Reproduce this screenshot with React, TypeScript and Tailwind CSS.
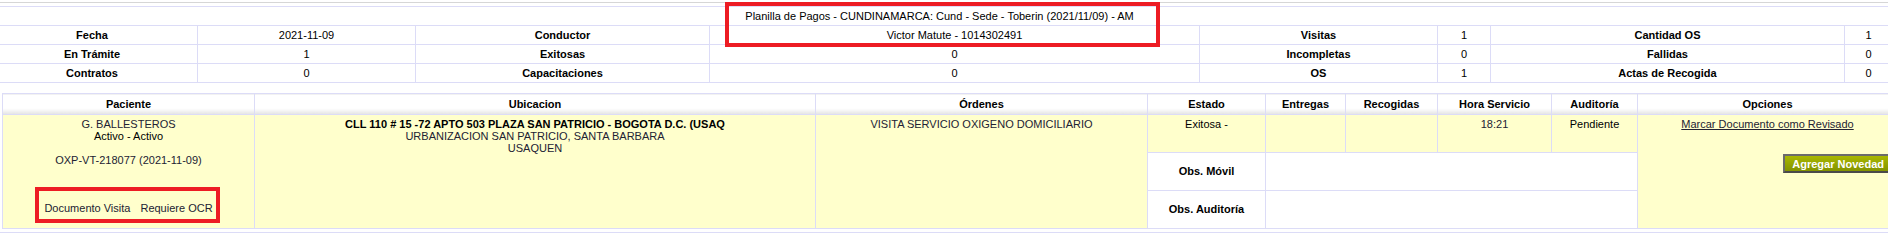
import React from 'react';

const summary = [
  ['Fecha', '2021-11-09', 'Conductor', 'Victor Matute - 1014302491', 'Visitas', '1', 'Cantidad OS', '1'],
  ['En Trámite', '1', 'Exitosas', '0', 'Incompletas', '0', 'Fallidas', '0'],
  ['Contratos', '0', 'Capacitaciones', '0', 'OS', '1', 'Actas de Recogida', '0'],
];

const sumWidths = ['w-[211px]', 'w-[218px]', 'w-[294px]', 'w-[490px]', 'w-[238px]', 'w-[53px]', 'w-[354px]', 'w-[48px]'];

const headers = [
  ['Paciente', 'w-[252px]'],
  ['Ubicacion', 'w-[561px]'],
  ['Órdenes', 'w-[332px]'],
  ['Estado', 'w-[118px]'],
  ['Entregas', 'w-[80px]'],
  ['Recogidas', 'w-[92px]'],
  ['Hora Servicio', 'w-[114px]'],
  ['Auditoría', 'w-[86px]'],
  ['Opciones', 'w-[260px]'],
];

function App() {
  const cell = 'border border-[#dcdcf7] p-0 text-center align-middle';
  const yellow = 'bg-[#ffffcc]';

  return (
    <div className="relative w-[1888px] h-[251px] overflow-hidden bg-white text-[11px] text-black" style={{ fontFamily: '"Liberation Sans", Arial, sans-serif' }}>
      <div className="h-[2px]" />
      <div className="h-[1px] bg-[#d6d6d6]" />
      <div className="h-[3px]" />

      {/* resumen de la planilla */}
      <div className="overflow-hidden">
        <table className="-ml-[14px] w-[1905px] table-fixed border-collapse border-t border-[#dcdcf7]">
          <colgroup>
            {sumWidths.map((w, i) => (
              <col key={i} className={w} />
            ))}
          </colgroup>
          <tbody>
            <tr>
              <td colSpan={8} className="border-b border-[#dcdcf7] p-0 h-[18px] leading-[18px] text-center">
                Planilla de Pagos - CUNDINAMARCA: Cund - Sede - Toberin (2021/11/09) - AM
              </td>
            </tr>
            {summary.map((row, r) => (
              <tr key={r}>
                {row.map((v, i) => (
                  <td key={i} className={`${cell} h-[18px] leading-[18px] ${i % 2 === 0 ? 'font-bold' : ''}`}>
                    {v}
                  </td>
                ))}
              </tr>
            ))}
          </tbody>
        </table>
      </div>

      <div className="h-[10px]" />

      {/* detalle */}
      <div className="overflow-hidden pl-[2px]">
        <table className="w-[1895px] table-fixed border-collapse text-[#222233]">
          <colgroup>
            {headers.map(([h, w]) => (
              <col key={h} className={w} />
            ))}
          </colgroup>
          <thead>
            <tr>
              {headers.map(([h]) => (
                <th key={h} className={`${cell} h-[21px] leading-[14px] font-bold text-black bg-linear-to-b from-white from-70% to-[#e3e3e3]`}>
                  {h}
                </th>
              ))}
            </tr>
          </thead>
          <tbody>
            <tr>
              <td rowSpan={3} className={`${cell} ${yellow} align-top pt-[3px] leading-[12px]`}>
                <div>G. BALLESTEROS</div>
                <div className="text-black">Activo - Activo</div>
                <div className="h-[12px]" />
                <div>OXP-VT-218077 (2021-11-09)</div>
                <div className="h-[36px]" />
                <div>
                  <span>Documento Visita</span>
                  <span className="ml-[10px]">Requiere OCR</span>
                </div>
              </td>
              <td rowSpan={3} className={`${cell} ${yellow} align-top pt-[3px] leading-[12px]`}>
                <div className="font-bold text-black">CLL 110 # 15 -72 APTO 503 PLAZA SAN PATRICIO - BOGOTA D.C. (USAQ</div>
                <div>URBANIZACION SAN PATRICIO, SANTA BARBARA</div>
                <div>USAQUEN</div>
              </td>
              <td rowSpan={3} className={`${cell} ${yellow} align-top pt-[3px] leading-[12px]`}>
                VISITA SERVICIO OXIGENO DOMICILIARIO
              </td>
              <td className={`${cell} ${yellow} h-[38px] align-top pt-[3px] leading-[12px] text-black`}>Exitosa - </td>
              <td className={`${cell} ${yellow}`} />
              <td className={`${cell} ${yellow}`} />
              <td className={`${cell} ${yellow} align-top pt-[3px] leading-[12px]`}>18:21</td>
              <td className={`${cell} ${yellow} align-top pt-[3px] leading-[12px] text-black`}>Pendiente</td>
              <td rowSpan={3} className={`${cell} ${yellow} align-top pt-[3px] leading-[12px]`}>
                <div className="flex flex-col">
                  <a href="#" className="underline text-[#222233] self-center">
                    Marcar Documento como Revisado
                  </a>
                  <button className="self-end mt-[24px] mr-[1px] h-[19px] pl-[7px] pr-[10px] border-2 border-t-[#6b6b6b] border-l-[#6b6b6b] border-b-[#4a4a4a] border-r-[#4a4a4a] bg-linear-to-b from-[#a9b800] to-[#839300] text-white font-bold text-[11px] leading-[14px]">
                    Agregar Novedad
                  </button>
                </div>
              </td>
            </tr>
            <tr>
              <td className={`${cell} h-[38px] font-bold text-black`}>Obs. Móvil</td>
              <td colSpan={4} className={`${cell}`} />
            </tr>
            <tr>
              <td className={`${cell} h-[38px] font-bold text-black`}>Obs. Auditoría</td>
              <td colSpan={4} className={`${cell}`} />
            </tr>
          </tbody>
        </table>
      </div>

      <div className="h-[3px]" />
      <div className="h-[1px] bg-[#dcdcf7]" />

      {/* marcas rojas */}
      <div className="absolute left-[725px] top-[2px] w-[435px] h-[45px] border-4 border-[#ed1c24]" />
      <div className="absolute left-[35px] top-[187px] w-[185px] h-[36px] border-4 border-[#ed1c24]" />
    </div>
  );
}

export default App;
